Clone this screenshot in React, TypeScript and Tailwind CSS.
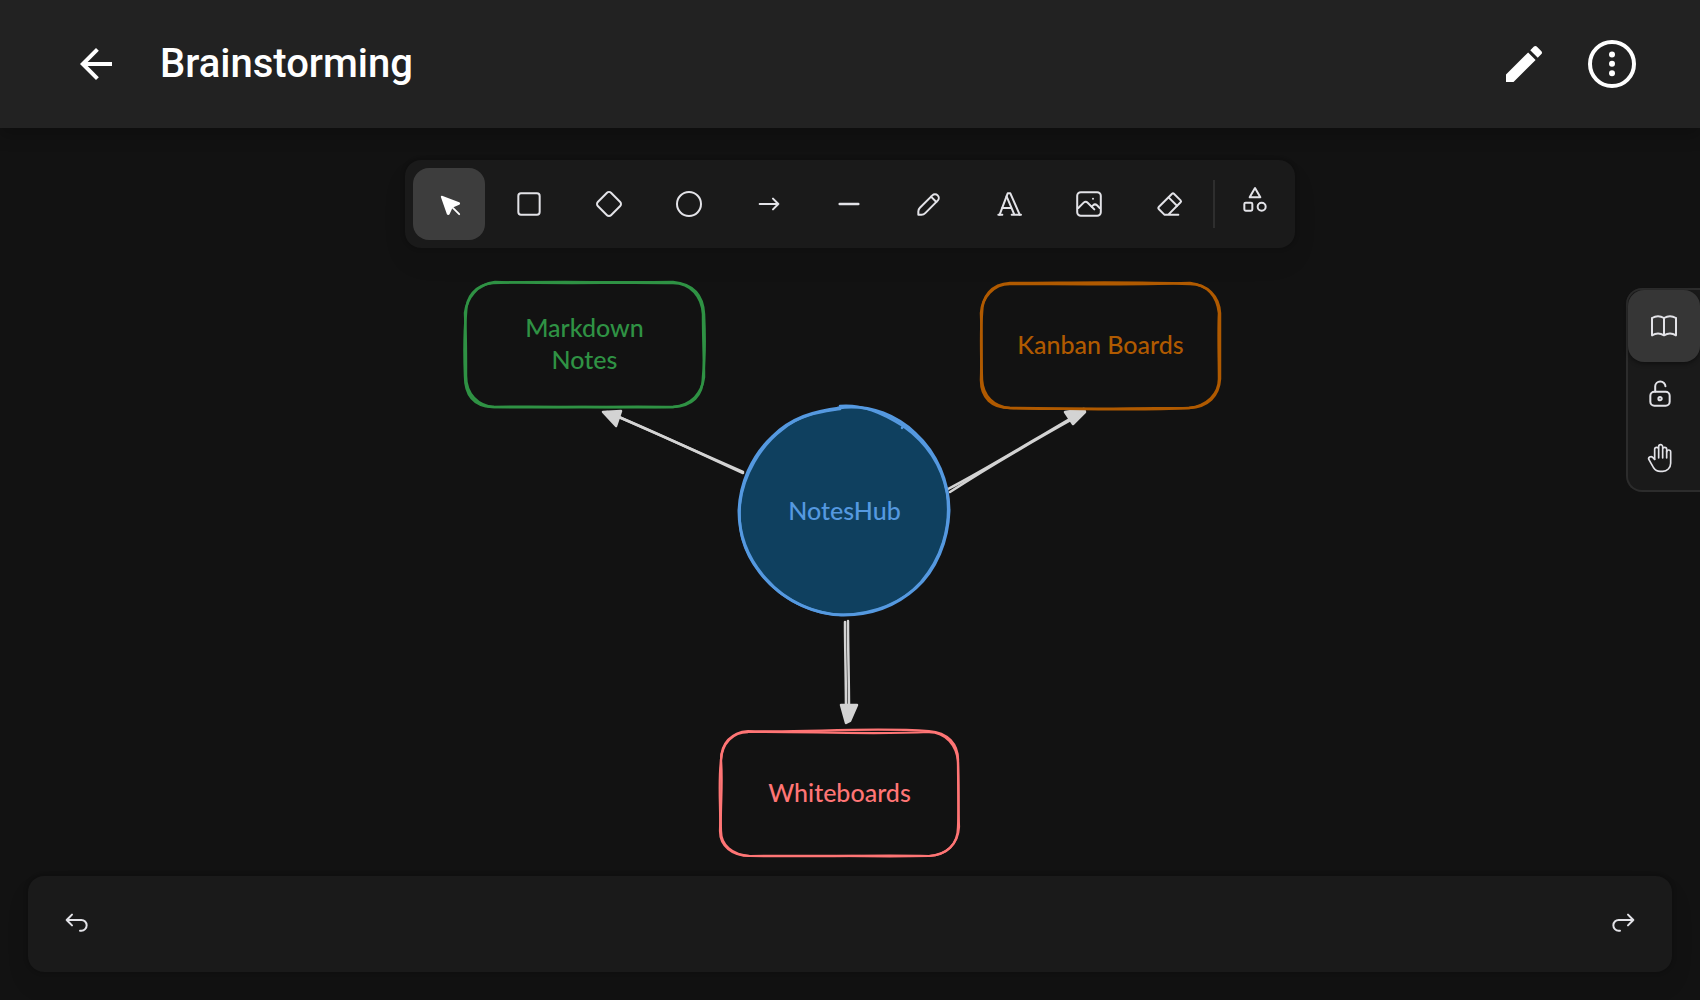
import type { ReactNode } from "react";

type IconProps = { box?: number; weight?: number; size?: string; children: ReactNode };

function Icon({ box = 24, weight = 1.5, size = "size-8", children }: IconProps) {
  return (
    <svg
      aria-hidden="true"
      viewBox={`0 0 ${box} ${box}`}
      className={size}
      fill="none"
      stroke="currentColor"
      strokeWidth={weight}
      strokeLinecap="round"
      strokeLinejoin="round"
    >
      {children}
    </svg>
  );
}

const tools: { name: string; icon: ReactNode }[] = [
  {
    name: "Selection",
    icon: (
      <Icon box={22} weight={1.25}>
        <path
          fill="currentColor"
          d="M6 6l4.153 11.793a.365.365 0 0 0 .331.207.366.366 0 0 0 .332-.207L13 13l4.787-1.994a.355.355 0 0 0 .213-.323.355.355 0 0 0-.213-.323L6 6z"
        />
        <path d="M13.5 13.5L18 18" />
      </Icon>
    ),
  },
  {
    name: "Rectangle",
    icon: (
      <Icon>
        <rect x="4" y="4" width="16" height="16" rx="2" />
      </Icon>
    ),
  },
  {
    name: "Diamond",
    icon: (
      <Icon>
        <path d="M10.5 20.4l-6.9-6.9c-.781-.781-.781-2.219 0-3l6.9-6.9c.781-.781 2.219-.781 3 0l6.9 6.9c.781.781.781 2.219 0 3l-6.9 6.9c-.781.781-2.219.781-3 0z" />
      </Icon>
    ),
  },
  {
    name: "Ellipse",
    icon: (
      <Icon>
        <circle cx="12" cy="12" r="9" />
      </Icon>
    ),
  },
  {
    name: "Arrow",
    icon: (
      <Icon>
        <path d="M5 12h14M15 16l4-4M15 8l4 4" />
      </Icon>
    ),
  },
  {
    name: "Line",
    icon: (
      <Icon box={20}>
        <path d="M4.167 10h11.666" />
      </Icon>
    ),
  },
  {
    name: "Draw",
    icon: (
      <Icon box={20} weight={1.25}>
        <path d="m7.643 15.69 7.774-7.773a2.357 2.357 0 1 0-3.334-3.334L4.31 12.357a3.333 3.333 0 0 0-.977 2.357v1.953h1.953c.884 0 1.732-.352 2.357-.977Z" />
        <path d="m11.25 5.417 3.333 3.333" />
      </Icon>
    ),
  },
  {
    name: "Text",
    icon: (
      <Icon>
        <path d="M4 20h3M14 20h7M6.9 15h6.9M10.2 6.3L16 20" />
        <path d="M5 20L11 4h2l7 16" />
      </Icon>
    ),
  },
  {
    name: "Image",
    icon: (
      <Icon box={20} weight={1.25}>
        <path d="M12.5 6.667h.01" />
        <path d="M4.91 2.625h10.18a2.284 2.284 0 0 1 2.285 2.284v10.182a2.284 2.284 0 0 1-2.284 2.284H4.909a2.284 2.284 0 0 1-2.284-2.284V4.909a2.284 2.284 0 0 1 2.284-2.284Z" />
        <path d="m3.333 12.5 3.334-3.333c.773-.745 1.726-.745 2.5 0l4.166 4.166" />
        <path d="m11.667 11.667.833-.834c.774-.744 1.726-.744 2.5 0l1.667 1.667" />
      </Icon>
    ),
  },
  {
    name: "Eraser",
    icon: (
      <Icon>
        <path d="M19 20H8.5l-4.21-4.3a1 1 0 0 1 0-1.41l10-10a1 1 0 0 1 1.41 0l5 5a1 1 0 0 1 0 1.41L11.5 20" />
        <path d="M18 13.3L11.7 7" />
      </Icon>
    ),
  },
];

const islandShadow =
  "shadow-[0_14px_28px_rgba(0,0,0,0.05),0_0_6px_rgba(0,0,0,0.08),0_0_2px_rgba(0,0,0,0.17)]";

function Header() {
  return (
    <header className="relative z-10 flex h-32 items-center bg-[#222222] px-15 text-white shadow-[0_6px_16px_rgba(0,0,0,0.25)]">
      <button type="button" aria-label="Back" className="flex size-18 items-center justify-center">
        <svg viewBox="0 0 24 24" className="size-12" fill="currentColor" aria-hidden="true">
          <path d="M20 11H7.83l5.59-5.59L12 4l-8 8 8 8 1.41-1.41L7.83 13H20v-2z" />
        </svg>
      </button>
      <h1 className="ml-7 flex-1 text-[40px] leading-12 font-medium">Brainstorming</h1>
      <button type="button" aria-label="Edit" className="flex size-18 items-center justify-center">
        <svg viewBox="0 0 24 24" className="size-12" fill="currentColor" aria-hidden="true">
          <path d="M3 17.25V21h3.75L17.81 9.94l-3.75-3.75L3 17.25zM20.71 7.04c.39-.39.39-1.02 0-1.41l-2.34-2.34c-.39-.39-1.02-.39-1.41 0l-1.83 1.83 3.75 3.75 1.83-1.83z" />
        </svg>
      </button>
      <button type="button" aria-label="More" className="ml-4 -mr-2 flex size-18 items-center justify-center">
        <svg viewBox="0 0 48 48" className="size-12" aria-hidden="true">
          <circle cx="24" cy="24" r="22" fill="none" stroke="currentColor" strokeWidth="4" />
          <g fill="currentColor">
            <circle cx="24" cy="14.4" r="3" />
            <circle cx="24" cy="23.8" r="3" />
            <circle cx="24" cy="33.2" r="3" />
          </g>
        </svg>
      </button>
    </header>
  );
}

function Toolbar() {
  return (
    <div
      role="toolbar"
      aria-label="Shapes"
      className={`z-10 mt-8 flex items-center gap-2 rounded-2xl bg-[#1a1a1a] p-2 ${islandShadow}`}
    >
      {tools.map((tool, i) => (
        <button
          key={tool.name}
          type="button"
          aria-label={tool.name}
          aria-pressed={i === 0}
          className={
            i === 0
              ? "flex size-18 items-center justify-center rounded-2xl bg-[#3d3d3d] text-white"
              : "flex size-18 items-center justify-center rounded-2xl"
          }
        >
          {tool.icon}
        </button>
      ))}
      <div className="h-12 w-0.5 bg-[#2e2e2e]" />
      <button type="button" aria-label="More tools" className="flex size-16 items-center justify-center self-start">
        <Icon>
          <path d="M12 3l-4 7h8z" />
          <circle cx="17" cy="17" r="3" />
          <rect x="4" y="14" width="6" height="6" rx="1" />
        </Icon>
      </button>
    </div>
  );
}

function Board() {
  return (
    <div className="relative mt-5 h-[600px] w-[780px] text-center text-[25px] leading-8 font-medium [font-family:Lato,'Open_Sans',sans-serif]">
      <svg
        viewBox="460 268 780 600"
        className="absolute inset-0 size-full"
        fill="none"
        strokeLinecap="round"
        strokeLinejoin="round"
        aria-hidden="true"
      >
        {/* connectors */}
        <g stroke="#d3d3d3" strokeWidth="2.5">
          <path d="M743 473C712 459 660 434 607 412" />
          <path d="M743 472C705 455 655 433 612 414" />
          <path fill="#d3d3d3" d="M603 412L621 411L616 426Z" />
          <path d="M948 489C985 470 1030 442 1080 413" />
          <path d="M950 492C990 466 1035 440 1078 416" />
          <path fill="#d3d3d3" d="M1065 412L1084 409L1085 412L1073 424Z" />
          <path d="M845 622C845 650 846 680 846 715" />
          <path d="M848 621C848 650 849 680 849 710" />
          <path fill="#d3d3d3" d="M841 705L857 705L850 721L846 723Z" />
        </g>

        {/* centre */}
        <path
          fill="#0f405f"
          stroke="#5599e0"
          strokeWidth="3"
          d="M838 408C872 403 899 418 915 433C937 453 949 482 949 511C948 541 936 570 916 588C896 606 871 615 844 615C816 615 786 602 766 579C748 559 739 538 739 511C740 484 751 457 772 437C791 418 814 411 840 408"
        />
        <path
          stroke="#5599e0"
          strokeWidth="2.5"
          d="M840 406C862 404 882 413 903 426C927 443 942 467 947 493C952 529 940 560 921 582C901 604 872 614 841 615C812 614 780 599 760 573C742 550 738 529 740 504C743 476 760 446 783 429C801 414 822 412 840 409M902 428L903 426"
        />

        {/* green card */}
        <g stroke="#2f9244" strokeWidth="2.5">
          <path d="M493 283C550 281 610 283 673 282C693 284 703 295 704 314C705 335 705 358 703 377C703 396 692 406 673 407C610 408 550 406 492 407C475 406 465 396 465 376C464 350 464 335 466 313C466 297 475 285 493 283Z" />
          <path d="M495 282C560 284 620 282 673 283C691 283 702 297 703 314C703 335 704 358 704 377C702 393 692 405 673 407C620 406 550 408 494 407C478 406 466 394 466 376C466 350 466 335 465 313C467 298 477 284 495 282Z" />
        </g>

        {/* orange card */}
        <g stroke="#b05a00" strokeWidth="2.5">
          <path d="M1010 283C1065 283 1130 281 1190 284C1207 284 1219 296 1220 313C1220 335 1220 358 1220 379C1219 396 1208 407 1189 408C1130 411 1065 408 1010 408C992 408 981 398 981 380C982 358 980 338 982 313C982 297 991 284 1010 283Z" />
          <path d="M1010 284C1065 284 1130 285 1190 283C1207 285 1217 296 1219 313C1218 335 1219 358 1219 379C1219 394 1207 406 1189 408C1130 408 1065 410 1010 408C994 407 983 396 982 380C981 358 982 338 981 313C982 298 993 284 1010 284Z" />
        </g>

        {/* red card */}
        <g stroke="#ff7575" strokeWidth="2.25">
          <path d="M748 731C800 733 865 727 929 731C947 732 959 744 958 762C959 785 958 808 959 827C958 844 947 855 929 856C865 857 805 855 750 856C732 856 720 846 720 831C721 808 718 785 721 760C721 744 731 732 748 731Z" />
          <path d="M748 732C800 731 865 735 929 732C946 732 957 746 958 762C958 785 959 808 958 827C958 845 946 855 929 856C865 855 805 857 750 856C732 855 721 845 721 831C720 808 723 785 721 760C722 743 733 732 748 732Z" />
        </g>
      </svg>

      <p className="absolute top-[11px] left-[4px] flex h-[127px] w-[241px] items-center justify-center px-16 text-[#2f9244]">
        Markdown Notes
      </p>
      <p className="absolute top-[12px] left-[520px] flex h-[127px] w-[241px] items-center justify-center text-[#b05a00]">
        Kanban Boards
      </p>
      <p className="absolute top-[137px] left-[279px] flex h-[210px] w-[211px] items-center justify-center text-[#5599e0]">
        NotesHub
      </p>
      <p className="absolute top-[460px] left-[259px] flex h-[127px] w-[241px] items-center justify-center text-[#ff7575]">
        Whiteboards
      </p>
    </div>
  );
}

function SidePanel() {
  return (
    <aside className="absolute top-40 right-0 flex w-[74px] flex-col rounded-l-2xl border-2 border-r-0 border-[#2c2c2c] bg-[#1a1a1a]">
      <button
        type="button"
        aria-label="Library"
        className="flex size-18 items-center justify-center rounded-2xl bg-[#363636] shadow-[0_2px_4px_rgba(0,0,0,0.4)]"
      >
        <Icon>
          <path d="M3 19a9 9 0 0 1 9 0 9 9 0 0 1 9 0M3 6a9 9 0 0 1 9 0 9 9 0 0 1 9 0M3 6v13M12 6v13M21 6v13" />
        </Icon>
      </button>
      <button type="button" aria-label="Keep tool active" className="flex size-16 items-center justify-center">
        <Icon box={20} weight={1.25}>
          <path d="M13.542 8.542H6.458a2.5 2.5 0 0 0-2.5 2.5v3.75a2.5 2.5 0 0 0 2.5 2.5h7.084a2.5 2.5 0 0 0 2.5-2.5v-3.75a2.5 2.5 0 0 0-2.5-2.5Z" />
          <path d="M10 13.958a1.042 1.042 0 1 0 0-2.083 1.042 1.042 0 0 0 0 2.083Z" />
          <path d="M7 8.5V5.2a3.2 3 0 0 1 6.4 0" />
        </Icon>
      </button>
      <button type="button" aria-label="Hand" className="flex size-16 items-center justify-center">
        <Icon weight={1.25}>
          <path d="M8 13V5.5a1.5 1.5 0 0 1 3 0V12M11 5.5v-2a1.5 1.5 0 1 1 3 0V12M14 5.5a1.5 1.5 0 0 1 3 0V12" />
          <path d="M17 7.5a1.5 1.5 0 0 1 3 0V16a6 6 0 0 1-6 6h-2 .208a6 6 0 0 1-5.012-2.7L7 19c-.312-.479-1.407-2.388-3.286-5.728a1.5 1.5 0 0 1 .536-2.022 1.867 1.867 0 0 1 2.28.28L8 13" />
        </Icon>
      </button>
    </aside>
  );
}

function HistoryBar() {
  return (
    <footer
      className={`mx-7 mt-auto mb-7 flex items-center justify-between self-stretch rounded-2xl bg-[#1a1a1a] p-3 ${islandShadow}`}
    >
      <button type="button" aria-label="Undo" className="flex size-18 items-center justify-center">
        <Icon box={20} weight={1.25}>
          <path d="M7.5 10.833 4.167 7.5 7.5 4.167M4.167 7.5h9.166a3.333 3.333 0 0 1 0 6.667H12.5" />
        </Icon>
      </button>
      <button type="button" aria-label="Redo" className="flex size-18 items-center justify-center">
        <Icon box={20} weight={1.25}>
          <path d="M12.5 10.833 15.833 7.5 12.5 4.167M15.833 7.5H6.667a3.333 3.333 0 1 0 0 6.667H7.5" />
        </Icon>
      </button>
    </footer>
  );
}

export default function App() {
  return (
    <div className="flex min-h-screen flex-col bg-[#121212] text-[#e3e3e8] [font-family:Roboto,sans-serif]">
      <Header />
      <main className="relative flex flex-1 flex-col items-center overflow-hidden">
        <Toolbar />
        <Board />
        <SidePanel />
        <HistoryBar />
      </main>
    </div>
  );
}
